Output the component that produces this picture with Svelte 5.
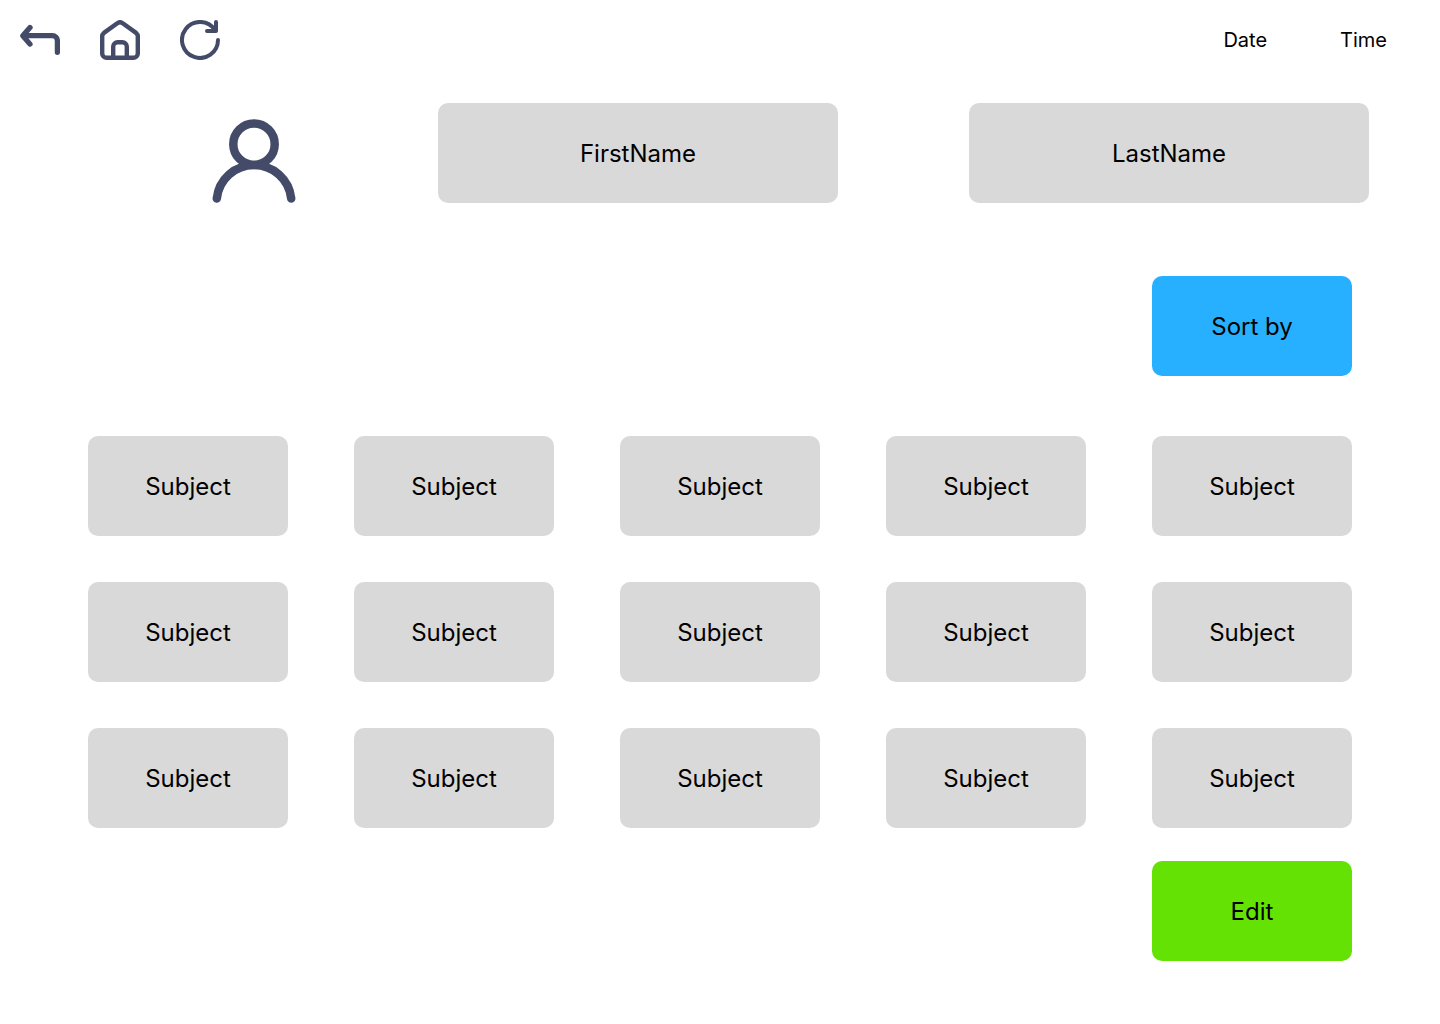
<script>
  const subjects = Array.from({ length: 15 }, (_, i) => ({ id: i, name: 'Subject' }));
  let firstName = $state('FirstName');
  let lastName = $state('LastName');
</script>

<header>
  <nav aria-label="Main">
    <button class="icon" type="button" aria-label="Back">
      <svg viewBox="0 0 40 40" stroke-width="5.3">
        <path d="M10 7.6 2.8 15.7 10 24.1M3 15.7H32.4A5 5 0 0 1 37.4 20.7V32.3" />
      </svg>
    </button>
    <button class="icon" type="button" aria-label="Home">
      <svg viewBox="0 0 40 40" stroke-width="4.4">
        <path d="M2.2 16.4A4.4 4.4 0 0 1 3.9 12.9L17.3 3.2A4.6 4.6 0 0 1 22.7 3.2L36.1 12.9A4.4 4.4 0 0 1 37.8 16.4V33.4A4.4 4.4 0 0 1 33.4 37.8H6.6A4.4 4.4 0 0 1 2.2 33.4Z" />
        <path d="M13.2 37.5V26.6A4.4 4.4 0 0 1 17.6 22.2H22.4A4.4 4.4 0 0 1 26.8 26.6V37.5" />
      </svg>
    </button>
    <button class="icon" type="button" aria-label="Refresh">
      <svg viewBox="0 0 40 40" stroke-width="4">
        <path d="M38 20A18 18 0 1 1 35 10" />
        <path d="M36 2V11H27" />
      </svg>
    </button>
  </nav>
  <div class="clock">
    <span>Date</span>
    <span>Time</span>
  </div>
</header>

<main>
  <section class="profile" aria-label="Profile">
    <svg class="avatar" viewBox="0 0 84 84" stroke-width="8.5" aria-hidden="true">
      <circle cx="42" cy="25.2" r="20.7" />
      <path d="M4.8 79.5A37.4 37.4 0 0 1 79.2 79.5" />
    </svg>
    <input class="tile" type="text" aria-label="First name" bind:value={firstName} />
    <input class="tile" type="text" aria-label="Last name" bind:value={lastName} />
  </section>

  <section class="board" aria-label="Subjects">
    <button class="tile sort" type="button">Sort by</button>
    <div class="subjects">
      {#each subjects as subject (subject.id)}
        <button class="tile" type="button">{subject.name}</button>
      {/each}
    </div>
    <button class="tile edit" type="button">Edit</button>
  </section>
</main>

<style>
  :global(body) {
    background: #fff;
    color: #000;
    font-family: Inter, 'Liberation Sans', sans-serif;
  }

  header {
    display: flex;
    justify-content: space-between;
    align-items: center;
    padding: 20px 53px 20px 20px;
  }

  nav {
    display: flex;
    gap: 40px;
  }

  .icon {
    width: 40px;
    height: 40px;
    padding: 0;
    border: 0;
    background: none;
    cursor: pointer;
  }

  svg {
    display: block;
    fill: none;
    stroke: #444b69;
    stroke-linecap: round;
    stroke-linejoin: round;
  }

  .clock {
    display: flex;
    gap: 73px;
    font-size: 20px;
    line-height: 24px;
  }

  .profile {
    display: grid;
    grid-template-columns: 95px 1fr 1fr;
    gap: 131px;
    align-items: end;
    padding: 23px 71px 0 212px;
  }

  .avatar {
    width: 84px;
    height: 84px;
  }

  .tile {
    box-sizing: border-box;
    width: 100%;
    min-width: 0;
    height: 100px;
    padding: 0;
    border: 0;
    border-radius: 10px;
    background: #d9d9d9;
    color: #000;
    font-family: inherit;
    font-size: 24px;
    line-height: 30px;
    text-align: center;
  }

  button.tile {
    padding-top: 1px;
    cursor: pointer;
  }

  .board {
    --gap: 66px;
    display: flex;
    flex-direction: column;
    padding: 73px 88px 63px;
  }

  .subjects {
    display: grid;
    grid-template-columns: repeat(5, 1fr);
    gap: 46px var(--gap);
    margin: 60px 0 33px;
  }

  .sort,
  .edit {
    align-self: flex-end;
    width: calc((100% - 4 * var(--gap)) / 5);
  }

  .sort {
    background: #26b0ff;
  }

  .edit {
    background: #64e204;
  }
</style>
